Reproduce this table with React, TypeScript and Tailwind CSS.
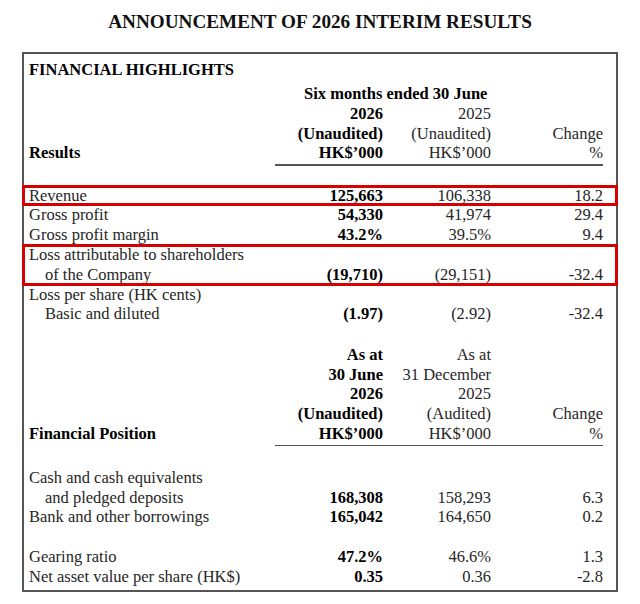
import React from "react";

type Row = { label?: string; indent?: boolean; a?: string; b?: string; c?: string };

function DataRow({ label = "", indent, a = "", b = "", c = "" }: Row) {
  return (
    <div className="grid grid-cols-[246px_108px_108px_112px] h-[19.8px] leading-[19.8px] pl-[5px]">
      <div className={indent ? "pl-[16px] text-[#262626] whitespace-nowrap" : "text-[#262626] whitespace-nowrap"}>{label}</div>
      <div className="text-right font-bold text-black">{a}</div>
      <div className="text-right text-[#262626]">{b}</div>
      <div className="text-right text-[#262626]">{c}</div>
    </div>
  );
}

function HeadRow({ label = "", a = "", b = "", c = "" }: Row) {
  return (
    <div className="grid grid-cols-[246px_108px_108px_112px] h-[19.8px] leading-[19.8px] pl-[5px]">
      <div className="font-bold text-black">{label}</div>
      <div className="text-right font-bold text-black whitespace-nowrap">{a}</div>
      <div className="text-right text-[#262626] whitespace-nowrap">{b}</div>
      <div className="text-right text-[#262626]">{c}</div>
    </div>
  );
}

function Underline() {
  return (
    <div className="pl-[251px] pr-[13px] pt-[1px]">
      <div className="h-[1.5px] bg-[#555]" />
    </div>
  );
}

function RedBox({ children }: { children: React.ReactNode }) {
  return (
    <div className="relative">
      {children}
      <div className="absolute -left-[2px] -right-[2px] -top-[1px] -bottom-[1px] border-[3px] border-[#d60000] pointer-events-none" />
    </div>
  );
}

export default function App() {
  return (
    <div
      className="w-[640px] h-[604px] bg-white text-[16.5px] overflow-hidden"
      style={{ fontFamily: '"Liberation Serif", "Times New Roman", serif' }}
    >
      <div className="pt-[9px] text-center font-bold text-[19.2px] leading-[26px] text-[#111]">
        ANNOUNCEMENT OF 2026 INTERIM RESULTS
      </div>
      <div className="mx-[22px] mt-[17px] border-2 border-[#555] h-[540px]">
        <div className="pl-[5px] pt-[6px] font-bold text-[16.5px] leading-[20px] text-black">
          FINANCIAL HIGHLIGHTS
        </div>
        <div className="pt-[4px]">
          <div className="grid grid-cols-[246px_328px] h-[19.8px] leading-[19.8px] pl-[5px]">
            <div />
            <div className="pl-[29px] font-bold text-black whitespace-nowrap">Six months ended 30 June</div>
          </div>
          <HeadRow a="2026" b="2025" />
          <HeadRow a="(Unaudited)" b="(Unaudited)" c="Change" />
          <HeadRow label="Results" a="HK$’000" b="HK$’000" c="%" />
          <Underline />
          <div className="h-[20px]" />
          <RedBox>
            <DataRow label="Revenue" a="125,663" b="106,338" c="18.2" />
          </RedBox>
          <DataRow label="Gross profit" a="54,330" b="41,974" c="29.4" />
          <DataRow label="Gross profit margin" a="43.2%" b="39.5%" c="9.4" />
          <RedBox>
            <DataRow label="Loss attributable to shareholders" />
            <DataRow label="of the Company" indent a="(19,710)" b="(29,151)" c="-32.4" />
          </RedBox>
          <DataRow label="Loss per share (HK cents)" />
          <DataRow label="Basic and diluted" indent a="(1.97)" b="(2.92)" c="-32.4" />
          <div className="h-[20.5px]" />
          <HeadRow a="As at" b="As at" />
          <HeadRow a="30 June" b="31 December" />
          <HeadRow a="2026" b="2025" />
          <HeadRow a="(Unaudited)" b="(Audited)" c="Change" />
          <HeadRow label="Financial Position" a="HK$’000" b="HK$’000" c="%" />
          <Underline />
          <div className="h-[21.5px]" />
          <DataRow label="Cash and cash equivalents" />
          <DataRow label="and pledged deposits" indent a="168,308" b="158,293" c="6.3" />
          <DataRow label="Bank and other borrowings" a="165,042" b="164,650" c="0.2" />
          <div className="h-[19.8px]" />
          <DataRow label="Gearing ratio" a="47.2%" b="46.6%" c="1.3" />
          <DataRow label="Net asset value per share (HK$)" a="0.35" b="0.36" c="-2.8" />
        </div>
      </div>
    </div>
  );
}
